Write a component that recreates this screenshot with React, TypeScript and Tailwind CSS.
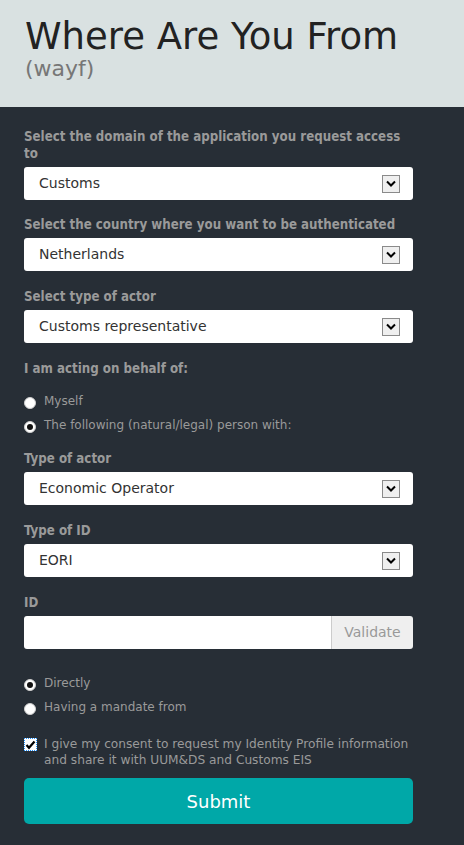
import React from "react";

const font = { fontFamily: '"DejaVu Sans", Verdana, sans-serif' };
const labelFont = { fontFamily: '"DejaVu Sans Condensed", "DejaVu Sans", Tahoma, sans-serif' };

function Label({ children }: { children: React.ReactNode }) {
	return <p className="text-[13.2px] leading-[17px] font-bold text-[#9a9a9a]" style={labelFont}>{children}</p>;
}

function Select({ value }: { value: string }) {
	return <div className="flex items-center justify-between h-[33px] bg-white rounded-[3px] pl-[15px] pr-[13px]">
		<span className="text-[14px] text-[#333]">{value}</span>
		<div className="w-[18px] h-[18px] bg-[#efefef] border border-[#8a8a8a] flex items-center justify-center">
			<svg width="10" height="7" viewBox="0 0 10 7">
				<path d="M1 1.5 L5 5.5 L9 1.5" fill="none" stroke="#000" strokeWidth="2" />
			</svg>
		</div>
	</div>;
}

function Radio({ checked, label }: { checked?: boolean; label: string }) {
	return <div className="flex items-center gap-[8px] h-[24px]">
		<div className="w-[12px] h-[12px] rounded-full bg-white border border-[#cfcfcf] flex items-center justify-center mt-[2px]">
			{checked && <div className="w-[6px] h-[6px] rounded-full bg-[#111]"></div>}
		</div>
		<span className="text-[12px] text-[#9a9a9a] -mt-[3px]">{label}</span>
	</div>;
}

export default function App() {
	return <div className="w-[464px] min-h-[845px] bg-[#272e36]" style={font}>
		<div className="bg-[#d9e1e1] h-[107px] pl-[25px] pt-[17px]">
			<h1 className="text-[37px] leading-[40px] text-[#222]">Where Are You From</h1>
			<p className="text-[22px] leading-[24px] text-[#777]">(wayf)</p>
		</div>
		<div className="pl-[24px] pr-[51px] pt-[21px] pb-[22px] flex flex-col">
			<Label>Select the domain of the application you request access to</Label>
			<div className="mt-[5px]"><Select value="Customs" /></div>

			<div className="mt-[16px]"><Label>Select the country where you want to be authenticated</Label></div>
			<div className="mt-[5px]"><Select value="Netherlands" /></div>

			<div className="mt-[17px]"><Label>Select type of actor</Label></div>
			<div className="mt-[5px]"><Select value="Customs representative" /></div>

			<div className="mt-[17px]"><Label>I am acting on behalf of:</Label></div>
			<div className="mt-[13px] flex flex-col">
				<Radio label="Myself" />
				<Radio checked label="The following (natural/legal) person with:" />
			</div>

			<div className="mt-[12px]"><Label>Type of actor</Label></div>
			<div className="mt-[5px]"><Select value="Economic Operator" /></div>

			<div className="mt-[17px]"><Label>Type of ID</Label></div>
			<div className="mt-[5px]"><Select value="EORI" /></div>

			<div className="mt-[17px]"><Label>ID</Label></div>
			<div className="mt-[5px] flex h-[33px] rounded-[3px] overflow-hidden">
				<div className="flex-1 bg-white"></div>
				<div className="w-[82px] bg-[#efefef] border-l border-[#ccc] flex items-center justify-center text-[14px] text-[#999]">Validate</div>
			</div>

			<div className="mt-[23px] flex flex-col">
				<Radio checked label="Directly" />
				<Radio label="Having a mandate from" />
			</div>

			<div className="mt-[16px] flex gap-[7px]">
				<div className="w-[13px] h-[13px] shrink-0 mt-[2px] bg-white border border-dotted border-[#1e90ff] flex items-center justify-center">
					<svg width="11" height="10" viewBox="0 0 11 10">
						<path d="M1.5 5 L4 7.8 L9.5 1.5" fill="none" stroke="#000" strokeWidth="2.2" />
					</svg>
				</div>
				<p className="text-[12.2px] leading-[16px] text-[#9a9a9a]">I give my consent to request my Identity Profile information and share it with UUM&amp;DS and Customs EIS</p>
			</div>

			<button className="mt-[10px] h-[46px] w-full rounded-[5px] bg-[#00a8a8] text-white text-[18px]" style={font}>Submit</button>
		</div>
	</div>;
}
